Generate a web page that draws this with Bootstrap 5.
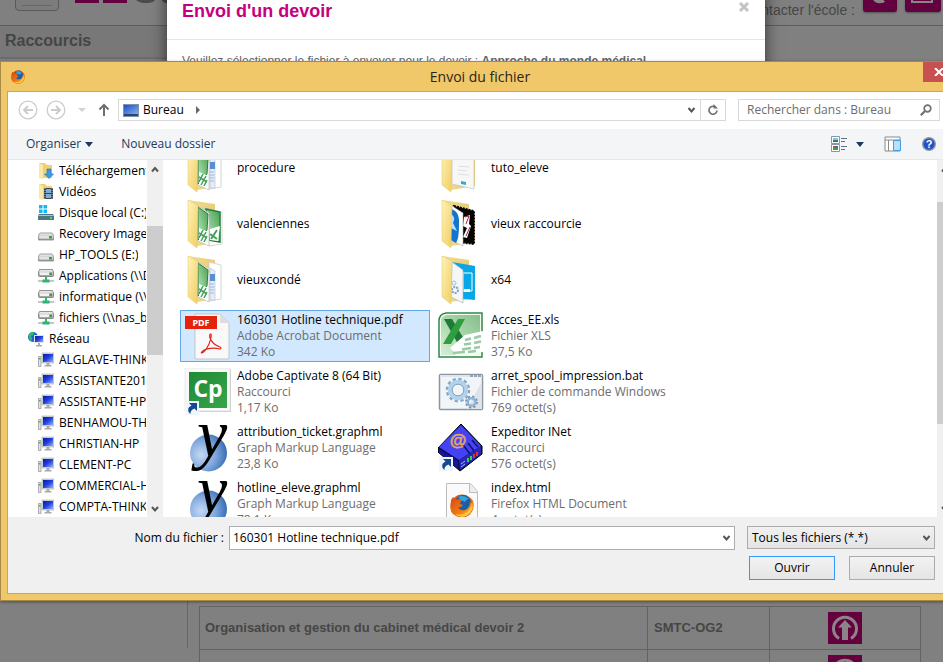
<!DOCTYPE html>
<html lang="fr">
<head>
<meta charset="utf-8">
<meta name="viewport" content="width=device-width, initial-scale=1">
<title>Envoi du fichier</title>
<link rel="stylesheet" href="https://cdn.jsdelivr.net/npm/bootstrap@5.3.0/dist/css/bootstrap.min.css">
<style>
body{background:#808080;font-family:"Liberation Sans",Arial,sans-serif;font-size:13px;color:#4c4c4c;height:100vh;overflow:hidden}
svg{display:block;flex:none}
button,input,select{font:inherit;color:inherit}
.desk{height:100vh}
/* school page behind */
.site-head{height:26px;border-bottom:1px solid #5d5d5d}
.menu-btn{width:44px;height:30px;margin:-19px 0 0 15px;border:1px solid #5a5a5a;border-radius:4px;background:#7c7c7c}
.menu-btn span{display:block;height:1px;width:30px;margin:18px auto 0;background:#666}
.brand{margin:-30px 0 0 16px;height:33px}
.brand-box{width:24px;height:33px;background:#630040}
.brand-name{font-size:38px;line-height:40px;font-weight:700;color:#4c4c4c;padding-left:6px}
.contact{font-size:14px;line-height:20px;color:#474747}
.pink-btn{background:#63003f;border:0;border-radius:3px;width:34px;height:32px;margin-top:-20px;box-shadow:0 1px 2px #555}
.pink-btn.mail{width:36px;margin-right:2px}
.side{width:188px;height:622px;border-right:1px solid #666}
.side h2{font-size:16px;line-height:30px;font-weight:700;color:#454545;background:#787878;padding-left:5px;border-bottom:2px solid #6c6c6c;margin:0 -1px 0 0;height:33px}
.course-grid{margin:580px 22px 0 11px;color:#464646;font-size:14px;font-weight:700;border-collapse:collapse}
.course-grid td{border:1px solid #636363;height:43px;padding:0 5px}
.course-grid td:first-child,.course-grid td:nth-child(2){font-size:13px}
.course-grid td:nth-child(2){width:122px;padding-left:6px}
.course-grid td:nth-child(3){width:151px}
.up-btn{border:0;padding:0;background:none;display:block;margin:0 auto}
/* web modal */
.web-modal{position:absolute;top:-20px;left:167px;right:178px;height:400px;background:#fff;box-shadow:0 5px 15px rgba(0,0,0,.6);color:#666;font-size:12px}
.web-modal header{height:60px;border-bottom:1px solid #e5e5e5;padding:20px 15px 0}
.web-modal h1{font-size:18px;line-height:22px;font-weight:700;color:#c6007e;margin:0}
.web-modal header button{border:0;background:none;padding:0;margin-top:2px;height:10px}
.web-modal p{padding:13px 15px;line-height:16px}
/* file dialog */
.picker{position:absolute;top:61px;left:0;right:-18px;background:#f0c869;border:1px solid #a8894a;padding:0 6px 6px;box-shadow:0 1px 3px rgba(0,0,0,.4);font-family:"Open Sans",sans-serif;font-size:12px;line-height:16px;color:#000}
.picker-title{height:29px}
.picker-title h2{font-size:14px;line-height:28px;color:#2c2618;margin:0;padding-left:12px}
.close-x{width:31px;height:20px;background:#c75050;border:0;padding:0;align-self:flex-start}
.picker-body{border:1px solid #c9a64f;background:#fff}
.nav-row{height:37px;padding:0 13px 1px 10px}
.ghost{border:0;background:none;padding:0}
.addr,.search{height:22px;border:1px solid #d9d9d9;background:#fff}
.addr .reload{width:25px;height:20px;border:0;border-left:1px solid #d9d9d9;background:none;padding:0 0 0 6px}
.search{width:202px;padding:0 7px 0 8px;margin-left:12px}
.search input{border:0;outline:0;width:160px;padding:0;background:none}
.search input::placeholder{color:#6d6d6d;opacity:1}
.tools{height:31px;background:#f4f5f7;border-bottom:1px solid #e6e7ea;color:#1e395b;padding:0 17px 0 18px}
.main-area{height:357px;overflow:hidden}
.tree{width:139px;overflow:hidden;white-space:nowrap;margin:0}
.tree li{height:21px;padding-left:30px;gap:5px}
.tree li.root{padding-left:20px}
.tree a{overflow:hidden;margin-right:1px}
.tree a,.file{color:#000;text-decoration:none}
.bar{width:16px;background:#f0f0f0}
.bar .thumb{background:#cdcdcd}
.files{overflow:hidden;padding-left:17px}
.file-grid{display:grid;grid-template-columns:250px 250px;gap:4px;margin-top:-18px}
.file{height:52px;padding:1px 3px;gap:5px;border:1px solid transparent;white-space:nowrap}
.file small{display:block;font-size:12px;color:#6d6d6d}
.file.sel{background:#d1e8ff;border-color:#66a7e8}
.foot{background:#f0f0f0;height:76px;padding:9px 18px 0 0}
.foot .lbl{width:221px;text-align:right;padding-right:5px;line-height:24px}
.combo{height:24px;border:1px solid #abadb3;background:#fff;padding:0 3px}
.combo input{border:0;outline:0;padding:0;background:none}
.foot .ftype{width:188px;height:23px;border:1px solid #acacac;background:linear-gradient(#f0f0f0,#e5e5e5);margin-left:12px;padding:0 3px 0 4px}
.ftype select{appearance:none;border:0;background:none;outline:0;padding:0}
.acts{gap:14px;margin-top:6px}
.act{width:86px;height:24px;border:1px solid #acacac;background:linear-gradient(#f2f2f2,#e5e5e5);padding:0}
.act.go{border-color:#3399ff}
</style>
<script src="https://cdn.jsdelivr.net/npm/bootstrap@5.3.0/dist/js/bootstrap.bundle.min.js"></script>
</head>
<body>
<svg width="0" height="0" class="position-absolute" aria-hidden="true">
<defs>
<linearGradient id="gFold" x1="0" x2="1" y2="1"><stop offset="0" stop-color="#fff3b8"/><stop offset="1" stop-color="#f0ce62"/></linearGradient>
<linearGradient id="gBack" x1="0" x2="1"><stop offset="0" stop-color="#f3dc93"/><stop offset="1" stop-color="#e8c972"/></linearGradient>
<linearGradient id="gGreen" x1="0" y1="1" x2="1" y2="0"><stop offset="0" stop-color="#c9e8ca"/><stop offset=".5" stop-color="#7fc585"/><stop offset="1" stop-color="#4b9c56"/></linearGradient>
<radialGradient id="gBall" cx=".3" cy=".55" r=".8"><stop offset="0" stop-color="#c5d8f4"/><stop offset=".5" stop-color="#7ea6dc"/><stop offset="1" stop-color="#1f5aa8"/></radialGradient>
<linearGradient id="gScreen" x2="1" y2="1"><stop offset="0" stop-color="#0a19a0"/><stop offset=".5" stop-color="#2340e0"/><stop offset="1" stop-color="#8fb2ff"/></linearGradient>
<linearGradient id="gDesk" x2="1" y2="1"><stop offset="0" stop-color="#1d4fc0"/><stop offset="1" stop-color="#7db0f6"/></linearGradient>
<linearGradient id="gDisk" x2="0" y2="1"><stop offset="0" stop-color="#f4f4f4"/><stop offset="1" stop-color="#9b9b9b"/></linearGradient>
<linearGradient id="gCp" x2="1" y2="1"><stop offset="0" stop-color="#1f8a35"/><stop offset="1" stop-color="#35a54a"/></linearGradient>
<linearGradient id="gFox" x2="1" y2="1"><stop offset="0" stop-color="#d9480f"/><stop offset=".6" stop-color="#f07c14"/><stop offset="1" stop-color="#ffd24a"/></linearGradient>
<symbol id="chev" viewBox="0 0 8 8"><path d="M1 2 4 5.500 7 2" fill="none" stroke="#555" stroke-width="2"/></symbol>
<symbol id="fox" viewBox="0 0 24 24"><circle cx="12" cy="12" r="11.500" fill="#e4600f"/><circle cx="13" cy="9" r="8" fill="#1c5fa8"/><path d="M8 3q6-3 11 2-3 0-4 3-4-1-7-5z" fill="#37a5dc"/><path d="M1 6 3 3l2 3q4-2 7 0-2 2-2 4l3 1q-2 3-5 2 2 4 7 3 5-2 5-8 2 2 2 1l-1-5q4 4 2 10-3 8-11 8.500Q0 23 .5 13z" fill="url(#gFox)"/><path d="M22 9q2 9-6 13-6 2-11-2 8 2 12-2 4-3 5-9z" fill="#ffc93c"/></symbol>
<symbol id="folder" viewBox="0 0 48 48"><path d="M4 0 31 4v10l6 2v26l-24 4z" fill="url(#gBack)"/></symbol>
<symbol id="flap" viewBox="0 0 48 48"><path d="M4 0 14 5 13 48 4 41z" fill="url(#gFold)" stroke="#e3c76e" stroke-width=".5"/></symbol>
<symbol id="xlsA" viewBox="0 0 48 48"><path d="m14 6 11 7v33l-11-5z" fill="#fff" stroke="#bbb" stroke-width=".7"/><path d="m14 7 10 7-1 16-9 10z" fill="url(#gGreen)" stroke="#2c7d3c"/><path d="m15 28 9 4v12l-9-5z" fill="#fff"/><path d="m15 38 4-8m-2 11 5-9m-2 10 3-6m-8-3 8 5" stroke="#43a05a" stroke-width="1.500"/></symbol>
<symbol id="paper" viewBox="0 0 48 48"><path d="m25 6 12 3v34l-12 2z" fill="#fff" stroke="#ccc" stroke-width=".8"/><path d="m26 12 5 3v29h-5z" fill="#e4ecf7" stroke="#b4bfcc" stroke-width=".6"/><path d="M26 18h5v7h-5z" fill="#5890ce"/><path d="M26 28h4m-4 3h4m-4 3h4m-4 3h4" stroke="#9eb6d8"/></symbol>
<symbol id="mixed" viewBox="0 0 48 48"><use href="#folder"/><use href="#paper"/><use href="#xlsA"/><use href="#flap"/></symbol>
<symbol id="greens" viewBox="0 0 48 48"><use href="#folder"/><path d="m21 8 17 4v32l-13 2z" fill="#fff" stroke="#bbb" stroke-width=".6"/><path d="m22 9 14 3v30l-11-2z" fill="url(#gGreen)" stroke="#21803a" stroke-width="1.500"/><path d="m26 29 10-3-2 15-8-1z" fill="#fff"/><path d="m27 39 6-9m-7 4 7 5" stroke="#43a05a" stroke-width="2"/><use href="#xlsA"/><use href="#flap"/></symbol>
<symbol id="tuto" viewBox="0 0 48 48"><use href="#folder"/><path d="m14 3 22 5v37l-22-5z" fill="#f7f7f7" stroke="#c4c4c4" stroke-width=".7"/><path d="m20 22 11 1m-11 3 9 1m-9 3 11 1" stroke="#dde0e3"/><path d="m23 37 5 1v3l-5-1z" fill="#24b2c9"/><use href="#flap"/></symbol>
<symbol id="vieux" viewBox="0 0 48 48"><use href="#folder"/><path d="m16 6 20 5v33l-15-2z" fill="#050505" stroke="#050505" stroke-width="2" stroke-dasharray="2 1"/><path d="m26 17 6-2-1 9 2 2-4 12-4-1 4-9-4-2z" fill="#fff"/><path d="m27 17 4-1-3 8m4 3-4 9" fill="none" stroke="#b3202d"/><path d="m14 6 11 7v33l-12-6z" fill="#fff" stroke="#aaa" stroke-width=".6"/><path d="M13 9q9 2 8 16 0 14-3 18l-5-3z" fill="#1375cf"/><path d="M13 14q5 3 2 9l4 8-6-3z" fill="#bfe1f8"/><use href="#flap"/></symbol>
<symbol id="x64" viewBox="0 0 48 48"><use href="#folder"/><path d="m14 6 23 4v34l-22-2z" fill="#07a7e8"/><path d="M25 17h9v18h-9z" fill="none" stroke="#fff" stroke-width="1"/><path d="M26 33h6v3h-6z" fill="#fff"/><path d="m14 6 11 8v33l-12-6z" fill="#f4f6f7" stroke="#aeb6ba" stroke-width=".7"/><circle cx="16" cy="27" r="2" fill="none" stroke="#a9bcc8"/><circle cx="17" cy="34" r="3" fill="none" stroke="#7ea3bf" stroke-width="2" stroke-dasharray="2 1"/><use href="#flap"/></symbol>
<symbol id="short" viewBox="0 0 14 14"><path d="M0 0h14v14H0z" fill="#eef5fc"/><path d="M4 2h8v8L9.500 7.500Q5 9 5.500 13 0 8 6.500 4.500z" fill="#15498f"/></symbol>
<symbol id="pdf" viewBox="0 0 48 48"><path d="M11 2h25l9 9v36H11z" fill="#f9f9f9" stroke="#c5c5c5"/><path d="M36 2v9h9z" fill="#ddd"/><path d="M1 4h32v13H1z" fill="#e5230d"/><text x="17" y="14" font-family="Noto Sans" font-weight="700" font-size="9" fill="#fff" text-anchor="middle">PDF</text><path d="M27 22q-2 0-1 4 2 6 10 9 2 1 0 2-9-2-16 1-4 3-2 3 3-1 7-9 3-8 2-10z" fill="none" stroke="#e0281a" stroke-width="1.200"/></symbol>
<symbol id="capt" viewBox="0 0 48 48"><path d="M2 1h45v43H2z" fill="#aaa" opacity=".6"/><path d="M1 0h45v43H1z" fill="#f8f8f8" stroke="#ddd" stroke-width=".6"/><path d="M5 4h38v36H5z" fill="url(#gCp)"/><text x="24" y="29" font-family="Open Sans" font-size="23" font-weight="700" fill="#fff" text-anchor="middle">Cp</text><use href="#short" x="1" y="33" width="14" height="14"/></symbol>
<symbol id="yed" viewBox="0 0 48 48"><circle cx="24.500" cy="29" r="18.500" fill="url(#gBall)"/><text x="13" y="33" font-family="Liberation Serif" font-style="italic" font-size="68">y</text></symbol>
<symbol id="xls" viewBox="0 0 48 48"><path d="M8 1h36v44H1V9q0-7 7-8z" fill="#f4faf2" stroke="#2b8a45" stroke-width="1.500"/><path d="M9 3h33v20L16 43H3V9q0-5 6-6z" fill="url(#gGreen)" opacity=".65"/><path d="m6 7h8l15 25h-9z" fill="#1f7a38"/><path d="M20 7h7L13 32H5z" fill="#2f9e3e"/><path d="m27 23 18-4v21l-26 3-7-7z" fill="#fff"/><path d="m27 28 6-1.500m3-.500 7-2m-17 8.500 7-1m3-.500 7-1.500m-19 8 9-1.500m3 0 6-1m-27 6 12-1m3 0 8-1" stroke="#9cc9a6" stroke-width="2.500"/></symbol>
<symbol id="bat" viewBox="0 0 48 48"><rect x="1.500" y="6.500" width="43" height="35" rx="1" fill="#f2f5f8" stroke="#8d97a3" stroke-width="1.500"/><path d="M2 7h42v2H2z" fill="#dfe5ec"/><path d="M32 8h3m1 0h3m1 0h3" stroke="#4b628d"/><path d="m29 41 15-28v28z" fill="#dfe3e8"/><circle cx="20" cy="22" r="10.800" fill="none" stroke="#86a9c6" stroke-width="3" stroke-dasharray="3.200 2.450"/><circle cx="20" cy="22" r="8" fill="none" stroke="#b3d2ea" stroke-width="4.500"/><circle cx="20" cy="22" r="5.800" fill="none" stroke="#6d92b2" stroke-width=".8"/><circle cx="33.500" cy="34" r="5.500" fill="none" stroke="#6f93b0" stroke-width="2" stroke-dasharray="2.200 2.120"/><circle cx="33.500" cy="34" r="3.800" fill="none" stroke="#8db4d4" stroke-width="2.600"/></symbol>
<symbol id="inet" viewBox="0 0 48 48"><path d="M23 0 44 22v8L22 47 0 28v-4z" fill="#0d0d52" stroke="#000"/><path d="M23 1 43 22 21 36 1 23z" fill="#4343f5"/><path d="m21 36 22-14v8L22 46z" fill="#2828b8"/><path d="M1 25 20 37v8L1 29z" fill="#16169c"/><text x="20" y="22" font-family="Liberation Sans" font-size="17" font-weight="700" fill="#e3a55b" stroke="#e3a55b" stroke-width=".5" text-anchor="middle">@</text><path d="m26 22 6 8m-2-11 6 8m-2-11 6 7" stroke="#111168" stroke-width="1.500"/><path d="M30 34v4m3-6v4" stroke="#35d047" stroke-width="2"/><path d="M36 30v4m3-6v4" stroke="#e43232" stroke-width="2"/><path d="m23 40 4-3m-4 6 4-3" stroke="#9cb3ff"/><use href="#short" x="1" y="33" width="14" height="14"/></symbol>
<symbol id="html" viewBox="0 0 48 48"><path d="M8.500 3.500h24l7 8V48h-31z" fill="#fafafa" stroke="#bcbcbc"/><path d="M31.500 3.500v9h8" fill="#eee" stroke="#bcbcbc"/><use href="#fox" x="12" y="14" width="24" height="24"/></symbol>
<symbol id="pc" viewBox="0 0 16 16"><path d="M4 1h12v10H4z" fill="#d3d6da" stroke="#a5a9ae" stroke-width=".6"/><path d="M5 2h10v8H5z" fill="url(#gScreen)"/><path d="M8.500 11h3v2h2v1.500h-7V13h2z" fill="#aaa"/><path d="M.5 4.500h2.500v10H.5z" fill="#e3e3e3" stroke="#8f8f8f" stroke-width=".7"/><path d="M1 6h1.500v1.500H1z" fill="#35ba3f"/></symbol>
<symbol id="disk" viewBox="0 0 16 16"><path d="M2 7h12l2 3v3q0 1-1 1H1q-1 0-1-1v-3z" fill="url(#gDisk)" stroke="#777" stroke-width=".7"/><path d="M1.500 10h13v2.500h-13z" fill="#e3e3e3"/><path d="M11 10h3v2.500h-3z" fill="#36a334"/></symbol>
<symbol id="sysd" viewBox="0 0 16 16"><path d="M1 0h3.500v3.500H1zM5.500 0H9v3.500H5.500zM1 4.500h3.500V8H1zM5.500 4.500H9V8H5.500z" fill="#13b8f2"/><path d="M1 9h14l1 2v4H0v-4z" fill="#4d7787"/><path d="M1 10h14l1 1H0z" fill="#b2c2c8"/><path d="M12 12h2v2h-2z" fill="#4ade3c"/></symbol>
<symbol id="netd" viewBox="0 0 16 16"><path d="M1.500 1.500h13l1 2.500v3.500q0 1-1 1h-13q-1 0-1-1V4z" fill="url(#gDisk)" stroke="#777" stroke-width=".8"/><path d="M2 4.500h9V7H2z" fill="#f2f2f2"/><path d="M11.500 4.500H14V7h-2.500z" fill="#36a334"/><path d="M0 13h16" stroke="#b5b5b5" stroke-width="1.500"/><path d="M7 9h2v2.500h2.500v3h-7v-3H7z" fill="#2db672"/></symbol>
<symbol id="dl" viewBox="0 0 16 16"><path d="M1 0h6l2 2h5v13H1z" fill="#efd173"/><path d="m1 0 4 2v14l-4-1z" fill="#fae9a6"/><path d="M9 6h4v5h2.500L11 15.500 6.500 11H9z" fill="#3d9ae6" stroke="#1c6cbb" stroke-width=".6"/></symbol>
<symbol id="vid" viewBox="0 0 16 16"><path d="M1 0h6l2 2h5v13H1z" fill="#efd173"/><path d="m1 0 4 2v14l-4-1z" fill="#fae9a6"/><path d="M6 4h9v11H6z" fill="#3a4148"/><path d="M8 5h5v4H8zM8 10h5v4H8z" fill="#7badd6"/><path d="M7 4v11m7-11v11" stroke="#fff" stroke-width=".6" stroke-dasharray="1 1"/></symbol>
<symbol id="net" viewBox="0 0 16 16"><circle cx="5" cy="6" r="5" fill="#1769d1"/><path d="M1 3q3-3 5-2 0 3-3 4 2 3 0 5Q0 8 1 3z" fill="#34bd57"/><path d="M6 4h10v8H6z" fill="#e0e3e8"/><path d="M7 5h8v6H7z" fill="url(#gScreen)"/><path d="M10 12h2v2h2v1.500H8V14h2z" fill="#aab"/></symbol>
<symbol id="up" viewBox="0 0 34 32"><path d="M0 0h34v32H0z" fill="#65003f"/><path d="M11 26.500a11.500 11.500 0 1 1 12 0" fill="none" stroke="#8c8489" stroke-width="3"/><path d="m17 8 7 7.500h-4V28h-6V15.500h-4z" fill="#8c8489"/></symbol>
</defs></svg>

<div class="desk">
<header class="site-head d-flex align-items-start">
<button class="menu-btn p-0" aria-label="Menu"><span></span></button>
<div class="brand d-flex"><div class="brand-box"></div><div class="brand-box ms-1 border-0"></div><div class="brand-name">Su</div></div>
<div class="contact ms-auto me-2">Contacter l'école :</div>
<button class="pink-btn me-2" aria-label="Téléphone"><svg width="20" height="32" viewBox="0 0 20 32"><path d="M3 17q4 8 13 4l-3-4-3 2-3-4z" fill="#8c8489"/></svg></button>
<button class="pink-btn mail" aria-label="Message"><svg width="22" height="32" viewBox="0 0 22 32"><path d="M1 10h20v11H1z" fill="none" stroke="#8c8489" stroke-width="2"/></svg></button>
</header>
<div class="d-flex align-items-start">
<aside class="side"><h2>Raccourcis</h2></aside>
<div class="flex-grow-1 d-flex"><table class="course-grid flex-grow-1 w-100">
<tr><td>Organisation et gestion du cabinet médical devoir 2</td><td>SMTC-OG2</td><td><button class="up-btn" aria-label="Envoyer le devoir 2"><svg width="34" height="32"><use href="#up"/></svg></button></td></tr>
<tr><td></td><td></td><td><button class="up-btn" aria-label="Envoyer le devoir"><svg width="34" height="32"><use href="#up"/></svg></button></td></tr>
</table></div>
</div>
</div>

<section class="web-modal">
<header class="d-flex justify-content-between align-items-start"><h1>Envoi d'un devoir</h1><button aria-label="Fermer"><svg width="12" height="10" viewBox="0 0 12 10"><path d="m2 1 8 8m0-8-8 8" stroke="#c4c4c4" stroke-width="3"/></svg></button></header>
<p>Veuillez sélectionner le fichier à envoyer pour le devoir : <b>Approche du monde médical</b></p>
</section>

<section class="picker" aria-label="Envoi du fichier">
<div class="picker-title d-flex align-items-center">
<svg class="ms-1" width="14" height="14"><use href="#fox"/></svg>
<h2 class="flex-grow-1 text-center">Envoi du fichier</h2>
<button class="close-x" aria-label="Fermer"><svg class="mx-auto" width="10" height="8" viewBox="0 0 10 8"><path d="m1 0 8 8m0-8-8 8" stroke="#fff" stroke-width="2"/></svg></button>
</div>
<div class="picker-body">
<div class="nav-row d-flex align-items-center">
<button class="ghost" aria-label="Précédent"><svg width="20" height="20" viewBox="0 0 20 20" fill="none" stroke="#ccc"><circle cx="10" cy="10" r="8.800" stroke-width="1.300"/><path d="M15 10H6m4-4-4 4 4 4" stroke-width="2"/></svg></button>
<button class="ghost ms-2" aria-label="Suivant"><svg width="20" height="20" viewBox="0 0 20 20" fill="none" stroke="#ccc"><circle cx="10" cy="10" r="8.800" stroke-width="1.300"/><path d="M5 10h9m-4-4 4 4-4 4" stroke-width="2"/></svg></button>
<button class="ghost ms-2 ps-1" aria-label="Historique"><svg width="8" height="4" viewBox="0 0 8 4"><path d="M0 0h8L4 4z" fill="#d3d3d3"/></svg></button>
<button class="ghost ms-2 ps-1 me-2" aria-label="Dossier parent"><svg width="12" height="14" viewBox="0 0 12 14"><path d="M6 13V2M1.500 6.500 6 2l4.500 4.500" fill="none" stroke="#6e6e6e" stroke-width="2"/></svg></button>
<div class="addr flex-grow-1 d-flex align-items-center">
<svg class="mx-1" width="16" height="13" viewBox="0 0 16 13"><path d="M0 0h16v13H0z" fill="#7f93ad"/><path d="M1 1h14v9H1z" fill="url(#gDesk)"/><path d="M1 10h14v2H1z" fill="#2c4468"/></svg>
<a href="#" class="text-black text-decoration-none">Bureau</a>
<svg class="ms-2 me-auto" width="12" height="8" viewBox="0 0 12 8"><path d="M4 0v8l4-4z" fill="#666"/></svg>
<button class="ghost me-1" aria-label="Emplacements"><svg width="9" height="8"><use href="#chev"/></svg></button>
<button class="reload" aria-label="Actualiser"><svg width="12" height="12" viewBox="0 0 12 12"><path d="M8 2.800A4 4 0 1 0 10 6.500" fill="none" stroke="#6e6e6e" stroke-width="1.600"/><path d="M6.500 0v4.500H11z" fill="#6e6e6e"/></svg></button>
</div>
<div class="search d-flex align-items-center justify-content-between">
<input type="search" aria-label="Rechercher" placeholder="Rechercher dans : Bureau">
<svg width="12" height="12" viewBox="0 0 12 12" fill="none" stroke="#707070"><circle cx="7.500" cy="4.500" r="3.300" stroke-width="1.700"/><path d="M5 7 .8 11.200" stroke-width="2.200"/></svg>
</div>
</div>
<div class="tools d-flex align-items-center">
<button class="ghost d-flex align-items-center gap-1">Organiser <svg width="8" height="5" viewBox="0 0 8 5"><path d="M0 0h8L4 5z" fill="#1e395b"/></svg></button>
<button class="ghost ms-4 ps-1">Nouveau dossier</button>
<button class="ghost ms-auto d-flex align-items-center gap-2" aria-label="Affichage"><svg width="16" height="16" viewBox="0 0 16 16"><path d="M.5.5h8v7h-8zM.5 8.500h8v7h-8z" fill="#fff" stroke="#8a96a5"/><path d="M2 2h5v2H2z" fill="#79c8ea"/><path d="M2 4h5v2H2z" fill="#2e7f65"/><path d="M2 10h3v4H2z" fill="#e34b2f"/><path d="M4 10h3v2H4z" fill="#3b62d8"/><path d="M3 12h4v2H3z" fill="#33a745"/><path d="M10 2.500h6M10 5.500h4M10 10.500h6M10 13.500h4" stroke="#5e7186"/></svg><svg width="9" height="5" viewBox="0 0 9 5"><path d="M1 0h8L5 5z" fill="#1e395b"/></svg></button>
<button class="ghost ms-3 me-3 ps-1" aria-label="Volet"><svg width="18" height="16" viewBox="0 0 18 16"><path d="M1 1h15v14H1zM1 4h15M4.500 4v11" fill="#fff" stroke="#8a8a8a"/><path d="M9.500 4.500h7v10h-7z" fill="#b9dffb" stroke="#3d9be9"/></svg></button>
<button class="ghost ms-1" aria-label="Aide"><svg width="14" height="14" viewBox="0 0 14 14"><circle cx="7" cy="7" r="6.300" fill="#2450c4" stroke="#8b95a7" stroke-width="1.400"/><text x="7" y="11" font-family="Liberation Sans" font-weight="700" font-size="11" fill="#fff" text-anchor="middle">?</text></svg></button>
</div>
<div class="main-area d-flex">
<ul class="tree list-unstyled">
<li class="d-flex align-items-center"><svg width="16" height="16"><use href="#dl"/></svg><a href="#">Téléchargements</a></li>
<li class="d-flex align-items-center"><svg width="16" height="16"><use href="#vid"/></svg><a href="#">Vidéos</a></li>
<li class="d-flex align-items-center"><svg width="16" height="16"><use href="#sysd"/></svg><a href="#">Disque local (C:)</a></li>
<li class="d-flex align-items-center"><svg width="16" height="16"><use href="#disk"/></svg><a href="#">Recovery Image</a></li>
<li class="d-flex align-items-center"><svg width="16" height="16"><use href="#disk"/></svg><a href="#">HP_TOOLS (E:)</a></li>
<li class="d-flex align-items-center"><svg width="16" height="16"><use href="#netd"/></svg><a href="#">Applications (\\D</a></li>
<li class="d-flex align-items-center"><svg width="16" height="16"><use href="#netd"/></svg><a href="#">informatique (\\s</a></li>
<li class="d-flex align-items-center"><svg width="16" height="16"><use href="#netd"/></svg><a href="#">fichiers (\\nas_ba</a></li>
<li class="d-flex align-items-center root"><svg width="16" height="16"><use href="#net"/></svg><a href="#">Réseau</a></li>
<li class="d-flex align-items-center"><svg width="16" height="16"><use href="#pc"/></svg><a href="#">ALGLAVE-THINK</a></li>
<li class="d-flex align-items-center"><svg width="16" height="16"><use href="#pc"/></svg><a href="#">ASSISTANTE2014</a></li>
<li class="d-flex align-items-center"><svg width="16" height="16"><use href="#pc"/></svg><a href="#">ASSISTANTE-HP</a></li>
<li class="d-flex align-items-center"><svg width="16" height="16"><use href="#pc"/></svg><a href="#">BENHAMOU-TH</a></li>
<li class="d-flex align-items-center"><svg width="16" height="16"><use href="#pc"/></svg><a href="#">CHRISTIAN-HP</a></li>
<li class="d-flex align-items-center"><svg width="16" height="16"><use href="#pc"/></svg><a href="#">CLEMENT-PC</a></li>
<li class="d-flex align-items-center"><svg width="16" height="16"><use href="#pc"/></svg><a href="#">COMMERCIAL-H</a></li>
<li class="d-flex align-items-center"><svg width="16" height="16"><use href="#pc"/></svg><a href="#">COMPTA-THINK</a></li>
</ul>
<div class="bar d-flex flex-column align-items-center"><svg class="mt-1" width="8" height="12" viewBox="0 0 8 12"><path d="M1 7.500 4 4l3 3.500" fill="none" stroke="#555" stroke-width="2"/></svg><div class="thumb w-100" style="height:129px;margin-top:50px"></div><svg class="mt-auto mb-1" width="8" height="8"><use href="#chev"/></svg></div>
<div class="files flex-grow-1">
<div class="file-grid">
<a href="#" class="file d-flex align-items-center"><svg width="48" height="48"><use href="#mixed"/></svg><span>procedure</span></a>
<a href="#" class="file d-flex align-items-center"><svg width="48" height="48"><use href="#tuto"/></svg><span>tuto_eleve</span></a>
<a href="#" class="file d-flex align-items-center"><svg width="48" height="48"><use href="#greens"/></svg><span>valenciennes</span></a>
<a href="#" class="file d-flex align-items-center"><svg width="48" height="48"><use href="#vieux"/></svg><span>vieux raccourcie</span></a>
<a href="#" class="file d-flex align-items-center"><svg width="48" height="48"><use href="#mixed"/></svg><span>vieuxcondé</span></a>
<a href="#" class="file d-flex align-items-center"><svg width="48" height="48"><use href="#x64"/></svg><span>x64</span></a>
<a href="#" class="file sel d-flex align-items-center"><svg width="48" height="48"><use href="#pdf"/></svg><span>160301 Hotline technique.pdf<small>Adobe Acrobat Document</small><small>342 Ko</small></span></a>
<a href="#" class="file d-flex align-items-center"><svg width="48" height="48"><use href="#xls"/></svg><span>Acces_EE.xls<small>Fichier XLS</small><small>37,5 Ko</small></span></a>
<a href="#" class="file d-flex align-items-center"><svg width="48" height="48"><use href="#capt"/></svg><span>Adobe Captivate 8 (64 Bit)<small>Raccourci</small><small>1,17 Ko</small></span></a>
<a href="#" class="file d-flex align-items-center"><svg width="48" height="48"><use href="#bat"/></svg><span>arret_spool_impression.bat<small>Fichier de commande Windows</small><small>769 octet(s)</small></span></a>
<a href="#" class="file d-flex align-items-center"><svg width="48" height="48"><use href="#yed"/></svg><span>attribution_ticket.graphml<small>Graph Markup Language</small><small>23,8 Ko</small></span></a>
<a href="#" class="file d-flex align-items-center"><svg width="48" height="48"><use href="#inet"/></svg><span>Expeditor INet<small>Raccourci</small><small>576 octet(s)</small></span></a>
<a href="#" class="file d-flex align-items-center"><svg width="48" height="48"><use href="#yed"/></svg><span>hotline_eleve.graphml<small>Graph Markup Language</small><small>78,1 Ko</small></span></a>
<a href="#" class="file d-flex align-items-center"><svg width="48" height="48"><use href="#html"/></svg><span>index.html<small>Firefox HTML Document</small><small>4 octet(s)</small></span></a>
</div>
</div>
<div class="bar d-flex flex-column align-items-center"><svg class="mt-1" width="8" height="12" viewBox="0 0 8 12"><path d="M1 7.500 4 4l3 3.500" fill="none" stroke="#555" stroke-width="2"/></svg><div class="thumb w-100" style="height:222px;margin-top:26px"></div><svg class="mt-auto mb-1" width="8" height="8"><use href="#chev"/></svg></div>
</div>
<div class="foot">
<div class="d-flex align-items-start">
<label class="lbl" for="fname">Nom du fichier :</label>
<div class="combo flex-grow-1 d-flex align-items-center"><input id="fname" class="flex-grow-1" value="160301 Hotline technique.pdf"><svg width="9" height="8"><use href="#chev"/></svg></div>
<div class="ftype d-flex align-items-center"><select class="flex-grow-1" aria-label="Type de fichier"><option>Tous les fichiers (*.*)</option></select><svg width="9" height="8"><use href="#chev"/></svg></div>
</div>
<div class="acts d-flex justify-content-end"><button class="act go">Ouvrir</button><button class="act">Annuler</button></div>
</div>
</div>
</section>
</body>
</html>
